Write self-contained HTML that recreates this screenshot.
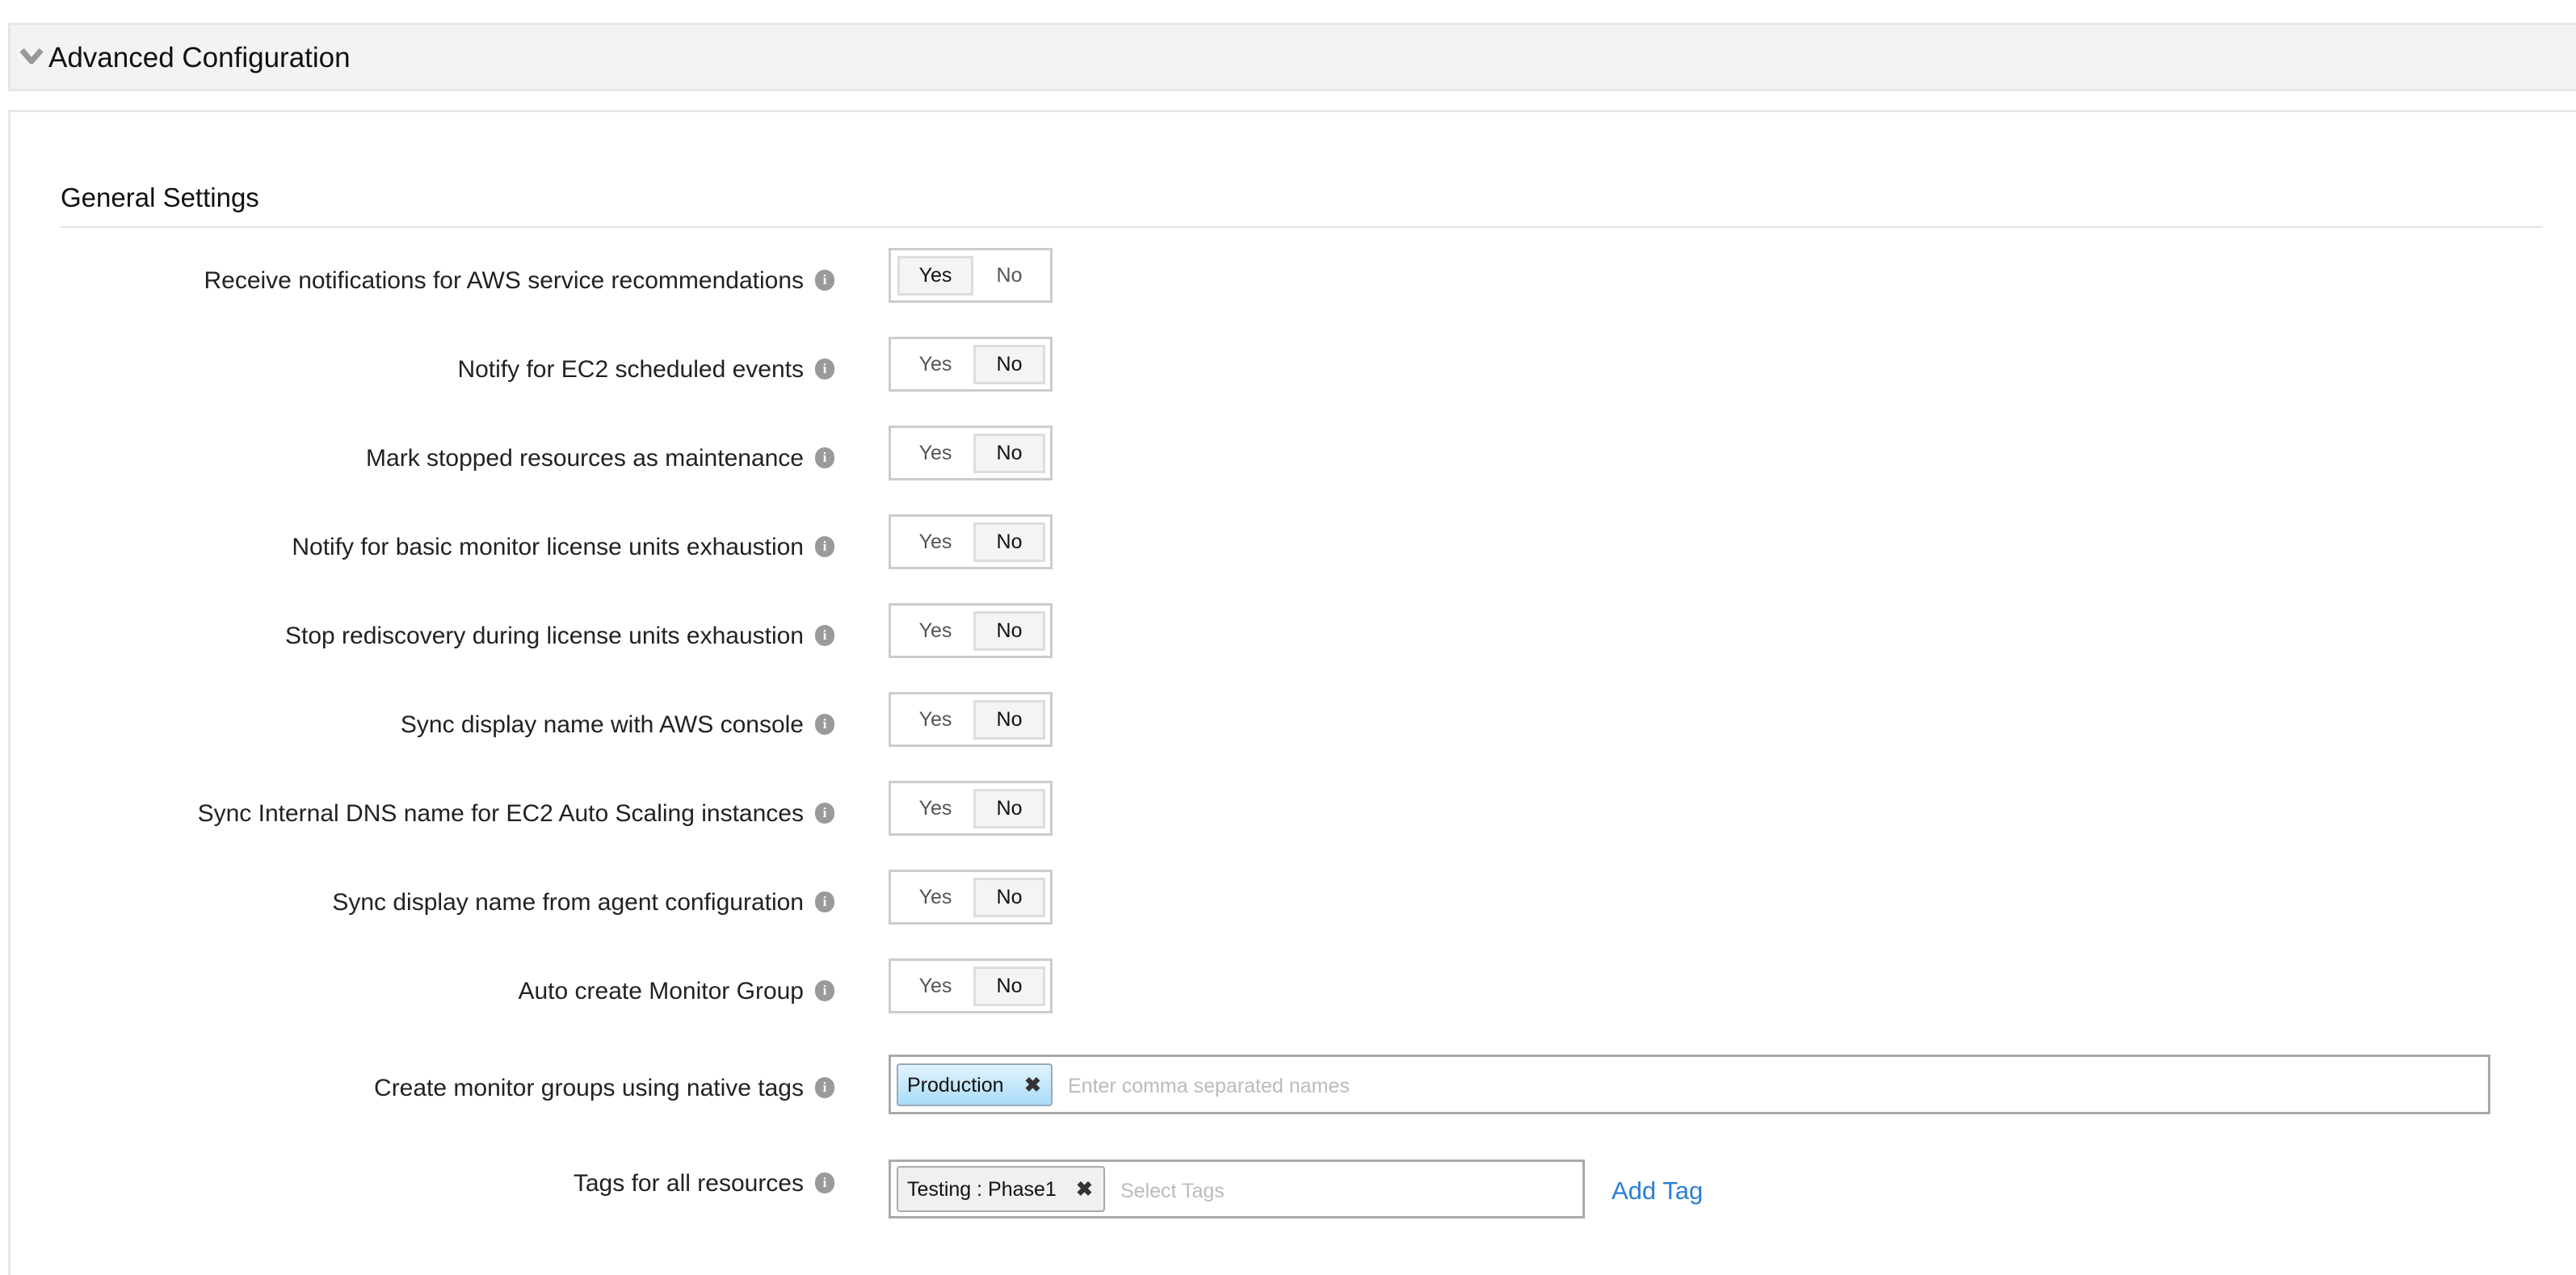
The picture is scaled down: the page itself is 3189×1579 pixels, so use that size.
<!DOCTYPE html>
<html style="width:3189px;height:1579px;overflow:hidden"><head><meta charset="utf-8"><style>
*{box-sizing:border-box;margin:0;padding:0}
body{width:3189px;height:1579px;background:#fff;font-family:"Liberation Sans",sans-serif;color:#222;position:relative;overflow:hidden}
.abs{position:absolute}
.hdr{left:10px;top:28px;width:3179px;height:85px;background:#f3f3f3;border:3px solid #e6e6e6;border-right:none}
.content{left:10px;top:136px;width:3179px;height:1443px;border:3px solid #e8e8e8;border-bottom:none;border-right:none}
.lbl{position:absolute;right:2194px;font-size:30px;white-space:nowrap;transform:translateY(-50%)}
.info{position:absolute;left:1009px;width:24px;height:26px;border-radius:12px;background:#9a9a9a;color:#fff;font-size:17px;font-weight:bold;text-align:center;line-height:26px;transform:translateY(-50%);font-family:"Liberation Serif",serif}
.tg{position:absolute;left:1100px;width:203px;height:68px;border:3px solid #ccc;font-size:25px}
.tg span{position:absolute;top:7px;height:49px;line-height:49px;text-align:center;color:#555}
.tg .y{left:8px;width:94px}
.tg .n{left:102px;width:89px}
.tg .on{background:#f4f4f4;border:3px solid #ddd;color:#111;line-height:43px}
</style></head><body>
<div class="abs hdr"></div>
<svg class="abs" style="left:24px;top:58px" width="30" height="24" viewBox="0 0 30 24"><path d="M3 4 L15 18 L27 4" fill="none" stroke="#999" stroke-width="7" stroke-linejoin="round"/></svg>
<div class="abs" style="left:60px;top:52px;font-size:35px;color:#111">Advanced Configuration</div>
<div class="abs content"></div>
<div class="abs" style="left:75px;top:226px;font-size:33px;color:#111">General Settings</div>
<div class="abs" style="left:75px;top:280px;width:3073px;height:2px;background:#e3e3e3"></div>

<div class="lbl" style="top:348px">Receive notifications for AWS service recommendations</div><div class="info" style="top:347px">i</div>
<div class="tg" style="top:307px"><span class="y on">Yes</span><span class="n">No</span></div>

<div class="lbl" style="top:458px">Notify for EC2 scheduled events</div><div class="info" style="top:457px">i</div>
<div class="tg" style="top:417px"><span class="y">Yes</span><span class="n on">No</span></div>

<div class="lbl" style="top:568px">Mark stopped resources as maintenance</div><div class="info" style="top:567px">i</div>
<div class="tg" style="top:527px"><span class="y">Yes</span><span class="n on">No</span></div>

<div class="lbl" style="top:678px">Notify for basic monitor license units exhaustion</div><div class="info" style="top:677px">i</div>
<div class="tg" style="top:637px"><span class="y">Yes</span><span class="n on">No</span></div>

<div class="lbl" style="top:788px">Stop rediscovery during license units exhaustion</div><div class="info" style="top:787px">i</div>
<div class="tg" style="top:747px"><span class="y">Yes</span><span class="n on">No</span></div>

<div class="lbl" style="top:898px">Sync display name with AWS console</div><div class="info" style="top:897px">i</div>
<div class="tg" style="top:857px"><span class="y">Yes</span><span class="n on">No</span></div>

<div class="lbl" style="top:1008px">Sync Internal DNS name for EC2 Auto Scaling instances</div><div class="info" style="top:1007px">i</div>
<div class="tg" style="top:967px"><span class="y">Yes</span><span class="n on">No</span></div>

<div class="lbl" style="top:1118px">Sync display name from agent configuration</div><div class="info" style="top:1117px">i</div>
<div class="tg" style="top:1077px"><span class="y">Yes</span><span class="n on">No</span></div>

<div class="lbl" style="top:1228px">Auto create Monitor Group</div><div class="info" style="top:1227px">i</div>
<div class="tg" style="top:1187px"><span class="y">Yes</span><span class="n on">No</span></div>

<div class="lbl" style="top:1348px">Create monitor groups using native tags</div><div class="info" style="top:1347px">i</div>
<div class="abs" style="left:1100px;top:1306px;width:1983px;height:74px;border:3px solid #aaa"></div>
<div class="abs" style="left:1110px;top:1317px;width:193px;height:53px;border:2px solid #9ab;border-radius:4px;background:linear-gradient(#e2f3fd,#a9dcf8);font-size:25px;line-height:51px;padding-left:11px;color:#111">Production <span style="position:absolute;left:156px;font-weight:bold;color:#333">✖</span></div>
<div class="abs" style="left:1322px;top:1331px;font-size:25px;color:#bbb">Enter comma separated names</div>

<div class="lbl" style="top:1466px">Tags for all resources</div><div class="info" style="top:1465px">i</div>
<div class="abs" style="left:1100px;top:1436px;width:862px;height:73px;border:3px solid #aaa"></div>
<div class="abs" style="left:1110px;top:1444px;width:258px;height:57px;border:2px solid #aaa;border-radius:4px;background:#f0f0f0;font-size:25px;line-height:55px;padding-left:11px;color:#111">Testing : Phase1 <span style="position:absolute;left:220px;font-weight:bold;color:#333">✖</span></div>
<div class="abs" style="left:1387px;top:1461px;font-size:25px;color:#bbb">Select Tags</div>
<div class="abs" style="left:1995px;top:1457px;font-size:31px;color:#2a7fd4">Add Tag</div>
</body></html>
